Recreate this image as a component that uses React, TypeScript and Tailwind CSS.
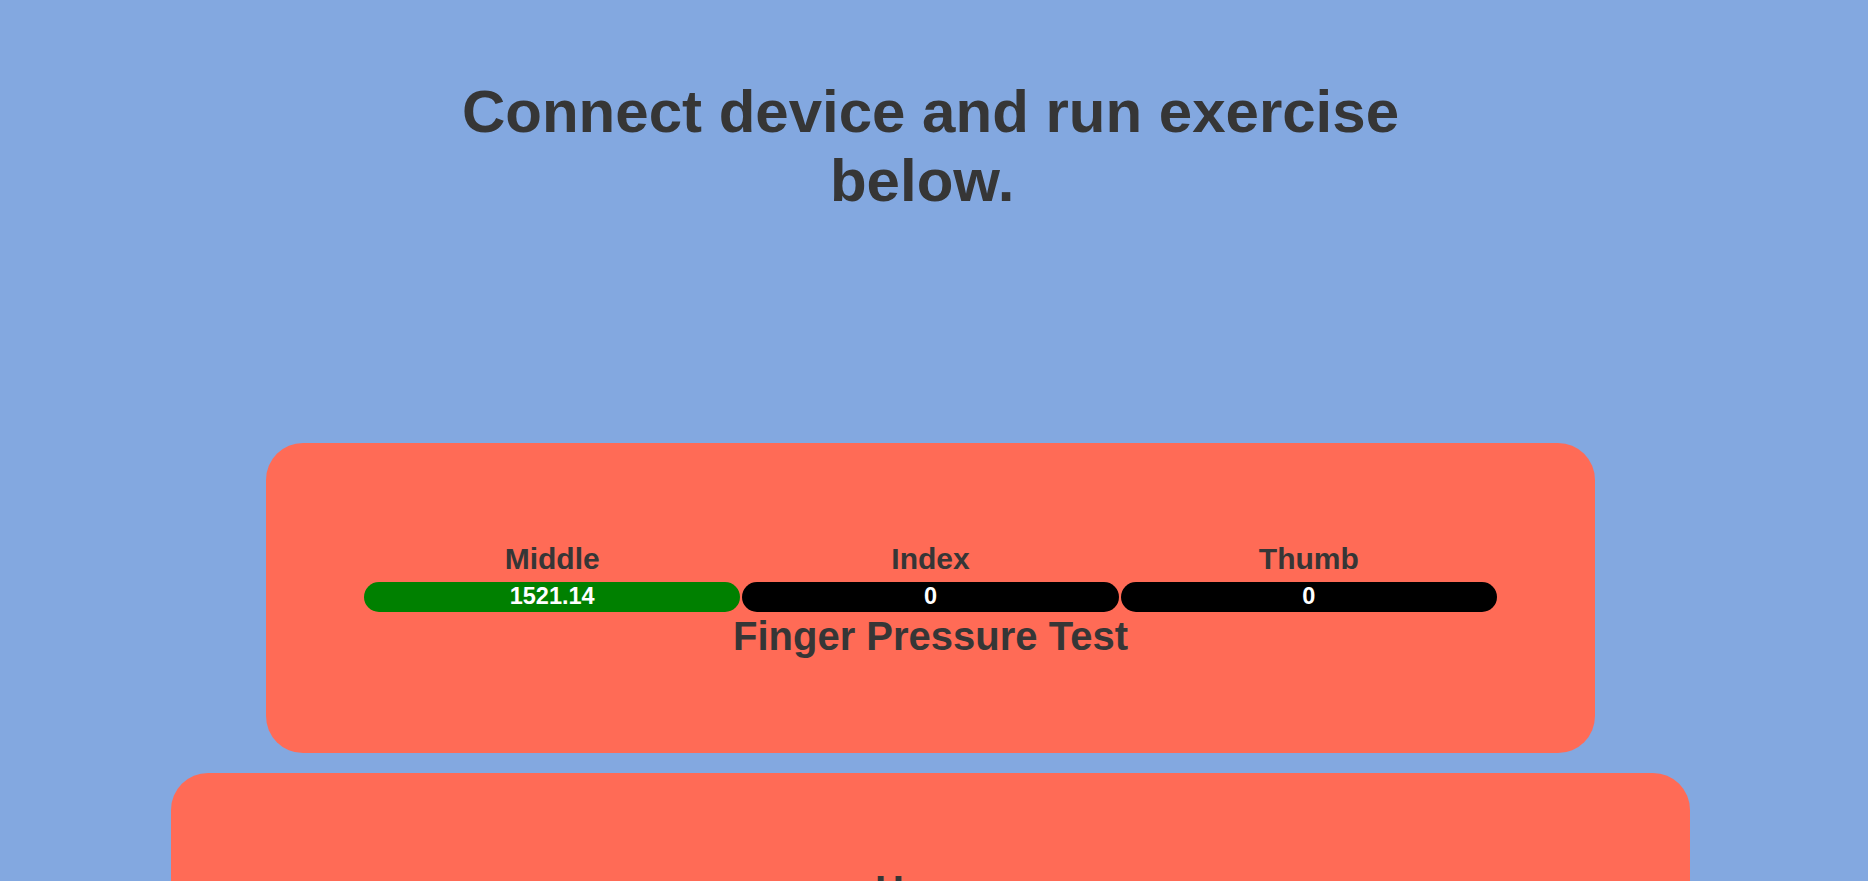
const fingers = [
  { name: "Middle", value: "1521.14", active: true },
  { name: "Index", value: "0", active: false },
  { name: "Thumb", value: "0", active: false },
];

export default function App() {
  return (
    <div
      className="h-[881px] overflow-hidden bg-[#83a8e0] text-[#363636]"
      style={{ fontFamily: '"Liberation Sans", Arial, sans-serif' }}
    >
      <div className="flex w-[1861px] flex-col items-center">
        <h1 className="mt-[77px] w-[1000px] text-center text-[60px] leading-[69px] font-bold">
          Connect device and run exercise below.{"\u00a0"}
        </h1>

        <section className="mt-[228px] w-[1329px] rounded-[37px] bg-[#ff6b56] px-[97px] pt-[99px] pb-[94px]">
          <div className="grid grid-cols-3">
            {fingers.map((f) => (
              <div key={f.name} className="flex flex-col items-center">
                <span className="text-[30px] leading-[34.5px] font-bold">{f.name}</span>
                <div
                  className={`mx-[1px] mt-[5px] flex h-[30px] w-[calc(100%-2px)] items-center justify-center rounded-full text-[23.5px] font-bold text-white ${
                    f.active ? "bg-[#008000]" : "bg-black"
                  }`}
                >
                  {f.value}
                </div>
              </div>
            ))}
          </div>
          <h2 className="mt-px text-center text-[40px] leading-[46px] font-bold">
            Finger Pressure Test
          </h2>
        </section>

        <section className="mt-[20px] h-[400px] w-[1519px] shrink-0 rounded-[37px] bg-[#ff6b56] pt-[94px]">
          <h2 className="text-center text-[40px] leading-[46px] font-bold">Home</h2>
        </section>
      </div>
    </div>
  );
}
